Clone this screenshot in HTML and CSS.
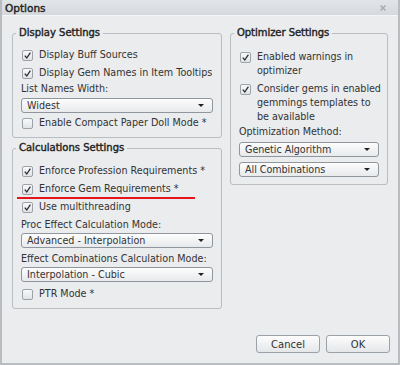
FILE: index.html
```html
<!DOCTYPE html>
<html lang="en">
<head>
    <meta charset="UTF-8">
    <title>Options</title>
    <link rel="stylesheet" href="styles.css">
</head>
<body>

<div class="window">
    <div class="titlebar">
        <span class="title">Options</span>
        <svg class="close" width="6" height="6" viewBox="0 0 6 6">
            <path d="M0.5 0.5 L5.5 5.5 M5.5 0.5 L0.5 5.5" stroke="#a3a8ad" stroke-width="1.2" fill="none"/>
        </svg>
    </div>

    <div class="content">
        <div class="col col-left">
            <fieldset class="group group-display">
                <legend>Display Settings</legend>
                <div class="check"><span class="box on"><svg viewBox="0 0 10 10"><path d="M2 5.2 L4.2 7.8 L8.2 1.8"/></svg></span>Display Buff Sources</div>
                <div class="check"><span class="box on"><svg viewBox="0 0 10 10"><path d="M2 5.2 L4.2 7.8 L8.2 1.8"/></svg></span>Display Gem Names in Item Tooltips</div>
                <div class="field-label">List Names Width:</div>
                <div class="select">Widest<span class="arrow"></span></div>
                <div class="check check-after"><span class="box"></span>Enable Compact Paper Doll Mode *</div>
            </fieldset>

            <fieldset class="group group-calc">
                <legend>Calculations Settings</legend>
                <div class="check"><span class="box on"><svg viewBox="0 0 10 10"><path d="M2 5.2 L4.2 7.8 L8.2 1.8"/></svg></span>Enforce Profession Requirements *</div>
                <div class="check marked"><span class="box on"><svg viewBox="0 0 10 10"><path d="M2 5.2 L4.2 7.8 L8.2 1.8"/></svg></span>Enforce Gem Requirements *<span class="underline"></span></div>
                <div class="check"><span class="box on"><svg viewBox="0 0 10 10"><path d="M2 5.2 L4.2 7.8 L8.2 1.8"/></svg></span>Use multithreading</div>
                <div class="field-label">Proc Effect Calculation Mode:</div>
                <div class="select">Advanced - Interpolation<span class="arrow"></span></div>
                <div class="field-label field-gap">Effect Combinations Calculation Mode:</div>
                <div class="select">Interpolation - Cubic<span class="arrow"></span></div>
                <div class="check check-after"><span class="box"></span>PTR Mode *</div>
            </fieldset>
        </div>

        <div class="col col-right">
            <fieldset class="group group-opt">
                <legend>Optimizer Settings</legend>
                <div class="check wrap"><span class="box on"><svg viewBox="0 0 10 10"><path d="M2 5.2 L4.2 7.8 L8.2 1.8"/></svg></span><span>Enabled warnings in optimizer</span></div>
                <div class="check wrap"><span class="box on"><svg viewBox="0 0 10 10"><path d="M2 5.2 L4.2 7.8 L8.2 1.8"/></svg></span><span>Consider gems in enabled gemmings templates to be available</span></div>
                <div class="field-label">Optimization Method:</div>
                <div class="select select-first">Genetic Algorithm<span class="arrow"></span></div>
                <div class="select select-gap">All Combinations<span class="arrow"></span></div>
            </fieldset>
        </div>
    </div>

    <div class="footer">
        <button class="btn">Cancel</button>
        <button class="btn">OK</button>
    </div>
</div>

</body>
</html>
```

FILE: styles.css
```css
body {
    margin: 0;
    padding: 0;
    font-family: "DejaVu Sans", Verdana, sans-serif;
    font-size: 9.6px;
    color: #333;
    background: #e9ebed;
}
.window {
    width: 400px;
    height: 365px;
    box-sizing: border-box;
    border: 2px solid #b9bdc2;
    border-top: none;
    background: #eaecee;
    display: flex;
    flex-direction: column;
}
.titlebar {
    height: 15px;
    display: flex;
    align-items: center;
    justify-content: space-between;
    padding: 0 12px 0 3px;
    background: linear-gradient(#e2e5e8, #d5d9dd);
    border-bottom: 1px solid #f4f5f6;
}
.title {
    font-size: 10.5px;
    color: #222;
    -webkit-text-stroke: 0.4px #222;
}
.close {
    display: block;
}
.content {
    display: flex;
    gap: 8px;
    padding: 10px 10px 0 10px;
    flex: 1;
}
.col {
    display: flex;
    flex-direction: column;
}
.col-left {
    width: 210px;
}
.col-right {
    width: 158px;
}
.group {
    margin: 0;
    padding: 0 8px 7px 8px;
    border: 1px solid #b8bdc2;
    border-radius: 3px;
    min-width: 0;
}
.group legend {
    padding: 0 3px;
    margin-left: -5px;
    line-height: 14px;
    font-size: 10px;
    color: #222;
    -webkit-text-stroke: 0.4px #222;
}
.group-display {
    padding-top: 8px;
}
.group-display .field-label {
    margin-top: -2px;
}
.group-calc {
    margin-top: 3px;
    padding-top: 9px;
}
.group-calc .check-after {
    margin-top: 5px;
}
.group-opt {
    padding-top: 10px;
    padding-right: 4px;
    letter-spacing: -0.05px;
}
.group-opt .field-label {
    margin-top: -3px;
}
.group-opt .select {
    margin-right: 4px;
}
.check {
    position: relative;
    display: flex;
    align-items: center;
    gap: 6px;
    line-height: 14px;
    margin-bottom: 4px;
    padding-left: 1px;
    white-space: nowrap;
}
.check.wrap {
    align-items: flex-start;
    white-space: normal;
}
.check.wrap .box {
    margin-top: 2px;
}
.check-after {
    margin-top: 3px;
    margin-bottom: 0;
}
.box {
    flex: none;
    width: 9px;
    height: 9px;
    border: 1px solid #9ca2a8;
    border-radius: 2px;
    background: linear-gradient(#f8f9fa, #e0e3e6);
    display: flex;
}
.box svg {
    width: 9px;
    height: 9px;
}
.box svg path {
    fill: none;
    stroke: #2a2a2a;
    stroke-width: 1.4;
}
.underline {
    position: absolute;
    left: -4px;
    width: 178px;
    bottom: -3px;
    height: 2px;
    background: #e8141b;
}
.field-label {
    line-height: 14px;
    white-space: nowrap;
}
.field-gap {
    margin-top: 4px;
}
.select {
    position: relative;
    height: 13px;
    margin-top: 1px;
    padding-left: 5px;
    line-height: 13px;
    border: 1px solid #8f969d;
    border-radius: 3px;
    background: linear-gradient(#fdfdfd, #e7e9eb);
    color: #333;
}
.group-display .select {
    margin-top: 2px;
}
.group-opt .select-first {
    margin-top: 3px;
}
.group-opt .select-gap {
    margin-top: 5px;
}
.arrow {
    position: absolute;
    right: 8px;
    top: 5px;
    width: 0;
    height: 0;
    border-left: 3px solid transparent;
    border-right: 3px solid transparent;
    border-top: 3px solid #222;
}
.footer {
    display: flex;
    justify-content: flex-end;
    gap: 6px;
    padding: 0 8px 10px 0;
}
.btn {
    width: 64px;
    height: 18px;
    padding: 0;
    font-family: "DejaVu Sans", Verdana, sans-serif;
    font-size: 10px;
    color: #333;
    border: 1px solid #9aa1a8;
    border-radius: 3px;
    background: linear-gradient(#fdfdfd, #e4e6e8);
}
```
